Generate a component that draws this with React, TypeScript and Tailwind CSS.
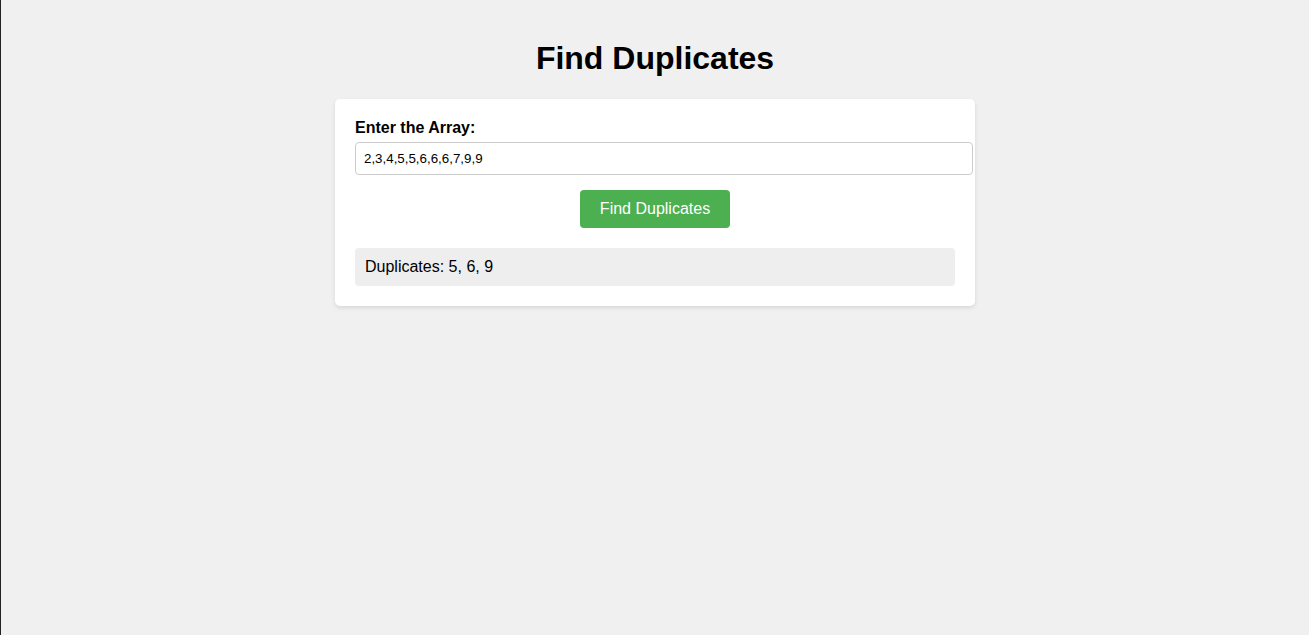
import React from "react";

export default function App() {
  return (
    <div
      className="min-h-screen bg-[#f0f0f0] border-l border-[#222] px-5 pt-[19px] pb-5 text-black"
      style={{ fontFamily: '"Liberation Sans", Arial, sans-serif' }}
    >
      <h1 className="text-[32px] font-bold text-center leading-[36.8px] my-[21.44px]">
        Find Duplicates
      </h1>
      <div className="mx-auto w-[640px] bg-white rounded-[5px] p-5 shadow-[0_2px_4px_rgba(0,0,0,0.1)]">
        <label className="block font-bold text-[16px] leading-[18.4px] mb-[5px]">
          Enter the Array:
        </label>
        <input
          type="text"
          defaultValue="2,3,4,5,5,6,6,6,7,9,9"
          className="box-content w-full px-2 py-2 border border-[#ccc] rounded-[4px] text-[13.33px] leading-[15px] h-[15px] outline-none bg-white"
          style={{ fontFamily: '"Liberation Sans", Arial, sans-serif' }}
        />
        <div className="flex justify-center mt-[15px]">
          <button className="bg-[#4CAF50] text-white text-[16px] leading-[18px] px-5 py-[10px] rounded-[4px]">
            Find Duplicates
          </button>
        </div>
        <div className="mt-5 bg-[#eeeeee] rounded-[4px] p-[10px] text-[16px] leading-[18px]">
          Duplicates: 5, 6, 9
        </div>
      </div>
    </div>
  );
}
